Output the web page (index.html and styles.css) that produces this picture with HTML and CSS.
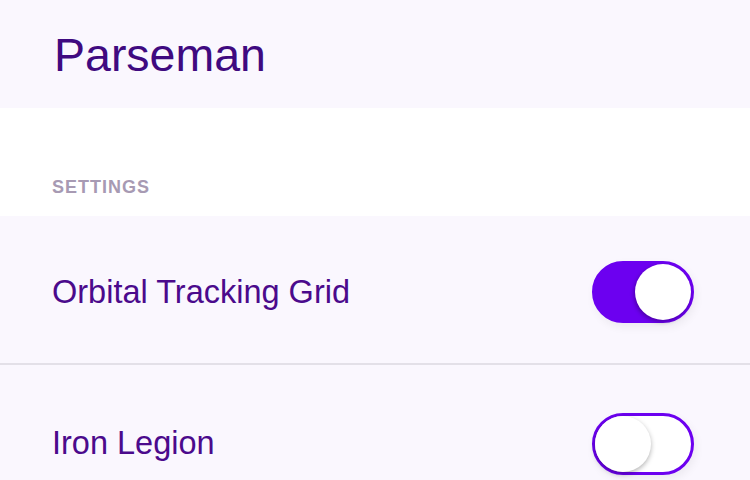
FILE: index.html
```html
<!DOCTYPE html>
<html>
<head>
<meta charset="utf-8">
<link rel="stylesheet" href="styles.css">
</head>
<body>
<header class="header"><h1 class="title">Parseman</h1></header>
<div class="section-label">SETTINGS</div>
<div class="list">
  <div class="row">
    <span class="row-text">Orbital Tracking Grid</span>
    <span class="toggle on"><span class="knob"></span></span>
  </div>
  <div class="row row2">
    <span class="row-text">Iron Legion</span>
    <span class="toggle"><span class="knob"></span></span>
  </div>
</div>
</body>
</html>
```
FILE: styles.css
```css
html, body { margin: 0; padding: 0; }
body {
  background: #ffffff;
  font-family: "Liberation Sans", Arial, sans-serif;
  width: 750px;
  height: 480px;
  overflow: hidden;
}
.header {
  height: 108px;
  background: #faf7fe;
  display: flex;
  align-items: center;
  padding-left: 54px;
  box-sizing: border-box;
}
.title {
  margin: 0;
  font-size: 46.5px;
  font-weight: normal;
  color: #3f0a80;
  line-height: 1;
  position: relative;
  top: 1px;
}
.section-label {
  height: 108px;
  box-sizing: border-box;
  padding: 69px 0 0 52px;
  font-size: 18px;
  font-weight: bold;
  color: #a79ab3;
  letter-spacing: 1px;
  line-height: 20px;
}
.list { background: #faf7fe; }
.row {
  height: 149px;
  display: flex;
  align-items: center;
  justify-content: space-between;
  padding: 5px 56px 0 52px;
  box-sizing: border-box;
  border-bottom: 2px solid #e3e0e8;
}
.row2 { border-bottom: none; padding-top: 8px; }
.row-text {
  font-size: 32.5px;
  color: #4b0a8c;
}
.toggle {
  width: 102px;
  height: 62px;
  box-sizing: border-box;
  border: 3px solid #6c00f0;
  border-radius: 31px;
  display: flex;
  align-items: center;
  justify-content: flex-start;
  background: #ffffff;
  box-shadow: 2px 4px 10px rgba(0,0,0,0.06);
}
.toggle.on {
  background: #6c00f0;
  justify-content: flex-end;
}
.knob {
  width: 56px;
  height: 56px;
  border-radius: 50%;
  background: #ffffff;
  box-shadow: 0 2px 5px rgba(0,0,0,0.3);
}
.toggle.on .knob { box-shadow: -1px 2px 4px rgba(0,0,0,0.3); }
```
